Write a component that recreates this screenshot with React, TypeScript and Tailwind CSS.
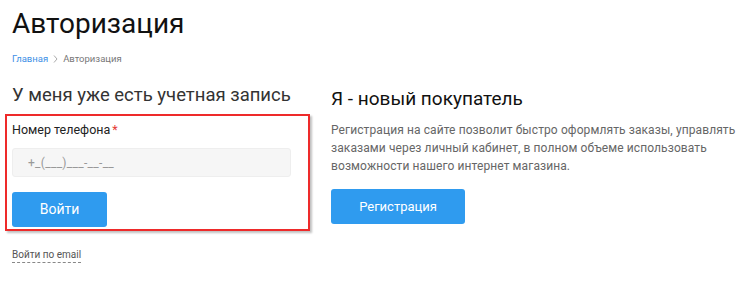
export default function App() {
  return (
    <main className="min-h-screen bg-white pl-3 pt-[4px] text-[#222] [font-family:Roboto,'Noto_Sans',sans-serif]">
      <h1 className="text-[28px] leading-[40px] font-normal text-[#111]">Авторизация</h1>
      <nav className="mt-[7px] flex items-center gap-[5px] text-[9.5px] leading-[16px]">
        <a href="#" className="text-[#3d8fe6]">Главная</a>
        <svg width="5" height="8" viewBox="0 0 5 8" className="text-[#aaa]">
          <path d="M1 0.5 L4 4 L1 7.5" fill="none" stroke="currentColor" strokeWidth="1" />
        </svg>
        <span className="text-[#777]">Авторизация</span>
      </nav>
      <div className="mt-[16px] flex gap-[21px]">
        <section className="w-[298px] shrink-0">
          <h2 className="text-[18.5px] leading-[24px] font-normal text-[#333]">У меня уже есть учетная запись</h2>
          <div className="-ml-[7px] mt-[7px] w-[305px] border-2 border-[#ee2a2a] px-[5px] pt-[5px] pb-[2px] shadow-[2px_2px_2px_rgba(0,0,0,0.25)]">
            <label className="block text-[12.5px] leading-[18px] text-[#222]">
              Номер телефона<span className="ml-[2px] text-[#e53935]">*</span>
            </label>
            <div className="mt-[9px] flex h-[29px] w-[279px] items-center rounded-[3px] border border-[#eeeeee] bg-[#f6f6f6] px-[15px] text-[12px] tracking-[0.3px] text-[#999]">
              +_(___)___-__-__
            </div>
            <button className="mt-[15px] h-[35px] w-[95px] rounded-[3px] bg-[#2f9bef] text-[14px] text-white">
              Войти
            </button>
          </div>
          <a href="#" className="mt-[17px] inline-block border-b border-dashed border-[#888] text-[10px] leading-[14px] text-[#555]">
            Войти по email
          </a>
        </section>
        <section className="w-[405px] shrink-0 pt-[3px]">
          <h2 className="text-[19px] leading-[26px] font-normal text-[#111]">Я - новый покупатель</h2>
          <p className="mt-[9px] text-[12px] leading-[18px] tracking-[0.1px] text-[#666]">
            Регистрация на сайте позволит быстро оформлять заказы, управлять заказами через личный кабинет, в полном объеме использовать возможности нашего интернет магазина.
          </p>
          <button className="mt-[14px] h-[35px] w-[134px] rounded-[3px] bg-[#2f9bef] text-[13px] text-white">
            Регистрация
          </button>
        </section>
      </div>
    </main>
  );
}
